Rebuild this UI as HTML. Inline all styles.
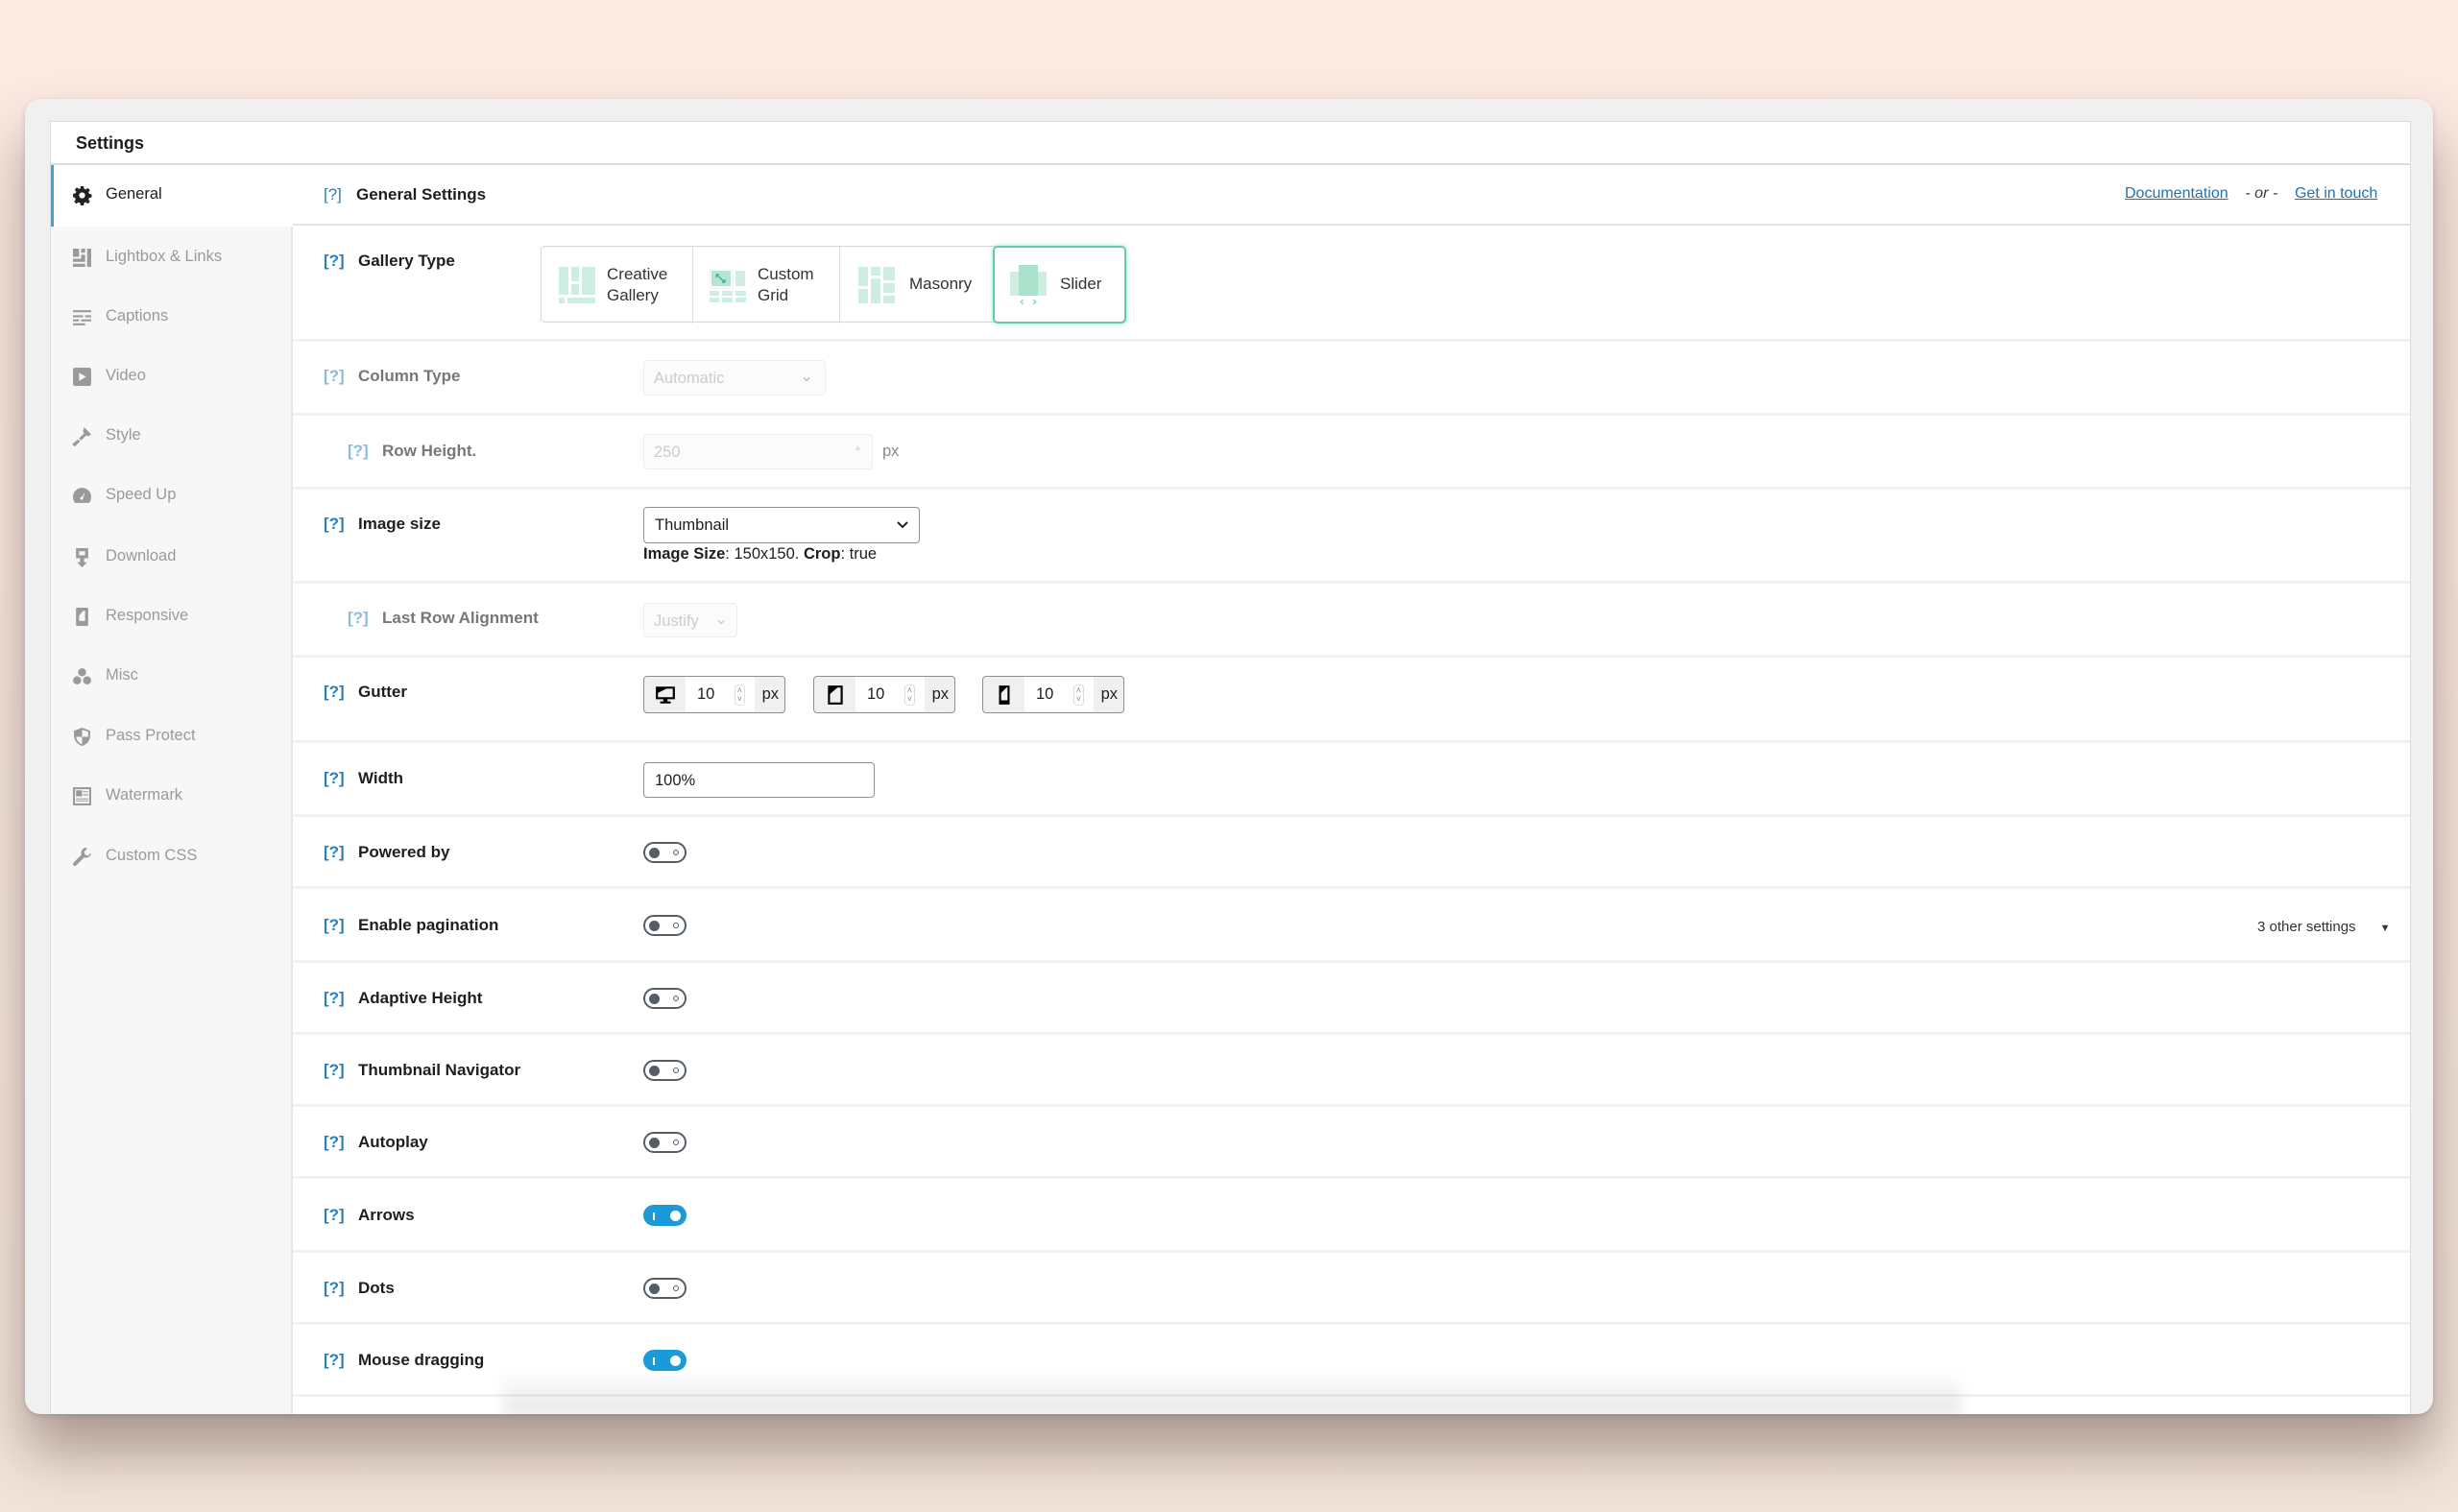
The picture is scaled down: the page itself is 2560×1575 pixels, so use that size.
<!DOCTYPE html>
<html><head><meta charset="utf-8">
<style>
*{box-sizing:border-box;margin:0;padding:0}
html,body{width:2560px;height:1575px;overflow:hidden}
body{background:linear-gradient(#fceae2,#f6e6dd 60%,#f3e4da);font-family:"Liberation Sans",sans-serif;position:relative;color:#1e1e1e}
.win{position:absolute;left:26px;top:103px;width:2508px;height:1370px;background:#f0f0f0;border-radius:16px;box-shadow:0 40px 60px rgba(80,60,50,.45),0 2px 6px rgba(0,0,0,.15)}
.panel{position:absolute;left:52px;top:126px;width:2459px;height:1347px;background:#fff;border:1px solid #ddd;border-bottom:none;overflow:hidden}
.abs{position:absolute}
.hdr{left:0;top:0;width:100%;height:45px;border-bottom:2px solid #dcdcdc}
.hdr span{position:absolute;left:26px;top:12px;font-weight:bold;font-size:18px}
.side{left:0;top:45px;width:252px;height:1400px;background:#f7f7f7;border-right:2px solid #e6e6e6}
.nav{position:absolute;left:0;width:252px;height:40px;font-size:16.5px;color:#9a9a9a}
.nav svg{position:absolute;left:22px;top:10px;width:21px;height:21px;fill:#9a9a9a}
.nav span{position:absolute;left:57px;top:10px}
.nav.act{background:#fff;border-left:3px solid #4a9fd0;height:64px;top:0;color:#1e1e1e}
.nav.act svg{fill:#222;left:19px;top:21px}
.nav.act span{left:54px;top:21px}
.line{position:absolute;left:252px;right:0;height:3px;background:#f1f1f1}
.q{position:absolute;color:#2a7fb8;font-size:17px;font-weight:bold}
.q.dis{color:#8bbbd8}
.lab{position:absolute;font-weight:bold;font-size:17px;color:#1e1e1e}
.lab.dis{color:#777}
.tg{position:absolute;left:617px;width:45px;height:22px;border:2.5px solid #555d66;border-radius:11px}
.tg:before{content:"";position:absolute;left:4px;top:3.5px;width:11px;height:11px;border-radius:50%;background:#555d66}
.tg:after{content:"";position:absolute;right:6px;top:5.5px;width:6px;height:6px;border-radius:50%;border:1.5px solid #555d66;box-sizing:border-box}
.tg.on{background:#1a9ad6;border-color:#1a9ad6}
.tg.on:before{left:auto;right:4px;background:#fff}
.tg.on:after{right:auto;left:8px;top:6px;width:2px;height:8px;border:none;border-radius:0;background:#fff}
.gt{position:absolute;top:0;height:80px;font-size:17px;color:#333}
.gt+.gt{border-left:1.5px solid #ddd}
.gg{position:absolute;top:577px;height:39px;width:148px;border:1.5px solid #8c8f94;border-radius:4px;background:#f0f0f1;font-size:16.5px;overflow:hidden}
.gg .in{position:absolute;left:43px;top:0;width:72px;height:36px;background:#fff}
.gg .in b{font-weight:normal;position:absolute;left:12px;top:9px}
.gg .in i{position:absolute;right:10px;top:8px;font-style:normal;font-size:9px;line-height:9px;color:#888;border:1px solid #ddd;border-radius:4px;padding:1px 2px}
.gg .px{position:absolute;right:6px;top:9px}
.gg svg{position:absolute;left:11px;top:8px}
</style></head><body>
<div class="win"></div>
<div class="panel">
 <div class="abs hdr"><span>Settings</span></div>
 <div class="abs side"></div>
 <div class="abs" style="left:0;top:45px;width:252px;height:1400px">
  <div class="nav act"><svg viewBox="0 0 20 20"><path d="M8.5 1h3l.5 2.5 1.6.7 2.1-1.5 2.1 2.1-1.5 2.1.7 1.6 2.5.5v3l-2.5.5-.7 1.6 1.5 2.1-2.1 2.1-2.1-1.5-1.6.7-.5 2.5h-3l-.5-2.5-1.6-.7-2.1 1.5-2.1-2.1 1.5-2.1-.7-1.6L1 11.5v-3l2.5-.5.7-1.6-1.5-2.1 2.1-2.1 2.1 1.5 1.6-.7zM10 7a3 3 0 100 6 3 3 0 000-6z"/></svg><span>General</span></div>
  <div class="nav" style="top:76px"><svg viewBox="0 0 20 20"><path d="M1 1h6v8H1zM9 1h4v4H9zM9 7h4v4H9zM15 1h4v18h-4zM1 11h12v3H1zM1 16h12v3H1z"/></svg><span>Lightbox &amp; Links</span></div>
  <div class="nav" style="top:138px"><svg viewBox="0 0 20 20"><path d="M1 3h18v2H1zM1 8h10v2H1zM13 8h6v2h-6zM1 12h6v2H1zM9 12h10v2H9zM1 16h12v2H1z"/></svg><span>Captions</span></div>
  <div class="nav" style="top:200px"><svg viewBox="0 0 20 20"><path d="M3 1h14a2 2 0 012 2v14a2 2 0 01-2 2H3a2 2 0 01-2-2V3a2 2 0 012-2zm4 5v8l7-4z" fill-rule="evenodd"/></svg><span>Video</span></div>
  <div class="nav" style="top:262px"><svg viewBox="0 0 20 20"><path d="M12 1l7 7-3 2-2-1-5 5-2-2 5-5-1-2zM6 13l2 2-5 5-2-1-.5-1.5z"/></svg><span>Style</span></div>
  <div class="nav" style="top:324px"><svg viewBox="0 0 20 20"><path d="M10 2a9 9 0 00-9 9c0 3 1 5 2 6h14c1-1 2-3 2-6a9 9 0 00-9-9zm0 9l3-5-2 6a1.5 1.5 0 11-1-1z"/></svg><span>Speed Up</span></div>
  <div class="nav" style="top:388px"><svg viewBox="0 0 20 20"><path d="M4 1h12v10h-4v4h3l-5 5-5-5h3v-4H4zm3 3v4h6V4z" fill-rule="evenodd"/></svg><span>Download</span></div>
  <div class="nav" style="top:450px"><svg viewBox="0 0 20 20"><path d="M5 1h10a1 1 0 011 1v16a1 1 0 01-1 1H5a1 1 0 01-1-1V2a1 1 0 011-1zm2 3v10h6V4zm0 0h4l-4 5z" fill-rule="evenodd"/></svg><span>Responsive</span></div>
  <div class="nav" style="top:512px"><svg viewBox="0 0 20 20"><circle cx="10" cy="6" r="4"/><circle cx="5" cy="14" r="4"/><circle cx="15" cy="14" r="4"/></svg><span>Misc</span></div>
  <div class="nav" style="top:575px"><svg viewBox="0 0 20 20"><path d="M10 1l8 3v5c0 5-4 9-8 10-4-1-8-5-8-10V4zm0 2v7H4c.5 3.5 3 6.5 6 7.5V10h6V5z" fill-rule="evenodd"/></svg><span>Pass Protect</span></div>
  <div class="nav" style="top:637px"><svg viewBox="0 0 20 20"><path d="M1 1h18v18H1zm2 2v14h14V3zm1 1h6v6H4zm7 1h5v1h-5zm0 3h5v1h-5zM4 12h12v1H4zm0 2h12v1H4z" fill-rule="evenodd"/></svg><span>Watermark</span></div>
  <div class="nav" style="top:700px"><svg viewBox="0 0 20 20"><path d="M14 1a5 5 0 00-4.6 6.9L1.5 15.8a1.8 1.8 0 002.7 2.7l7.9-7.9A5 5 0 0019 6l-3 3-3-1-1-3 3-3z"/></svg><span>Custom CSS</span></div>
 </div>

 <div class="line" style="top:106px;height:2px;background:#e2e2e2"></div>
 <div class="q" style="left:284px;top:66px;font-weight:normal">[?]</div>
 <div class="lab" style="left:318px;top:66px">General Settings</div>
 <div class="abs" style="left:2160px;top:66px;font-size:16px;color:#3a3a3a">
  <span style="color:#2271b1;text-decoration:underline">Documentation</span>&nbsp;&nbsp;&nbsp; <i>- or -</i> &nbsp;&nbsp;&nbsp;<span style="color:#2271b1;text-decoration:underline">Get in touch</span></div>

 <div class="line" style="top:226px"></div>
 <div class="line" style="top:303px"></div>
 <div class="line" style="top:380px"></div>
 <div class="line" style="top:478px"></div>
 <div class="line" style="top:555px"></div>
 <div class="line" style="top:644px"></div>
 <div class="line" style="top:721px"></div>
 <div class="line" style="top:796px"></div>
 <div class="line" style="top:873px"></div>
 <div class="line" style="top:948px"></div>
 <div class="line" style="top:1023px"></div>
 <div class="line" style="top:1098px"></div>
 <div class="line" style="top:1175px"></div>
 <div class="line" style="top:1250px"></div>
 <div class="line" style="top:1325px"></div>

 <div class="q" style="left:284px;top:135px">[?]</div>
 <div class="lab" style="left:320px;top:135px">Gallery Type</div>
 <div class="abs" style="left:510px;top:129px;width:609px;height:80px;border:1.5px solid #d5d5d5;border-radius:5px">
  <div class="gt" style="left:0;width:157px">
   <svg class="abs" style="left:18px;top:21px" width="38" height="38" viewBox="0 0 38 38" fill="#cfeee2"><rect x="0" y="0" width="10" height="29"/><rect x="13" y="0" width="8" height="15"/><rect x="13" y="18" width="8" height="11"/><rect x="24" y="0" width="14" height="29"/><rect x="0" y="32" width="6" height="6"/><rect x="9" y="32" width="29" height="6"/></svg>
   <div class="abs" style="left:68px;top:18px;line-height:22px">Creative<br>Gallery</div></div>
  <div class="gt" style="left:157px;width:153px">
   <svg class="abs" style="left:17px;top:23px" width="38" height="36" viewBox="0 0 38 36" fill="#cfeee2"><rect x="2" y="2" width="20" height="16" fill="#b4e4d2"/><rect x="0" y="0" width="24" height="20" fill="none" stroke="#e3f5ee"/><rect x="27" y="2" width="10" height="16"/><path d="M7 6l9 8M7 6h3M7 6v3M16 14h-3M16 14v-3" stroke="#3cb88a" stroke-width="1.4" fill="none"/><rect x="0" y="23" width="10" height="5"/><rect x="13" y="23" width="11" height="5"/><rect x="27" y="23" width="11" height="5"/><rect x="0" y="30" width="10" height="5"/><rect x="13" y="30" width="11" height="5"/><rect x="27" y="30" width="11" height="5"/></svg>
   <div class="abs" style="left:67px;top:18px;line-height:22px">Custom<br>Grid</div></div>
  <div class="gt" style="left:310px;width:160px">
   <svg class="abs" style="left:19px;top:21px" width="38" height="38" viewBox="0 0 38 38" fill="#cfeee2"><rect x="0" y="0" width="10" height="20"/><rect x="0" y="23" width="10" height="15"/><rect x="13" y="0" width="10" height="9"/><rect x="13" y="12" width="10" height="26"/><rect x="26" y="0" width="12" height="14"/><rect x="26" y="17" width="12" height="10"/><rect x="26" y="30" width="12" height="8"/></svg>
   <div class="abs" style="left:72px;top:29px">Masonry</div></div>
  <div class="gt" style="left:470px;width:139px;top:-1.5px;height:81px;border:2.5px solid #5ccfa4;border-radius:5px;box-shadow:0 0 5px rgba(92,207,164,.6)">
   <svg class="abs" style="left:16px;top:18px" width="38" height="42" viewBox="0 0 38 42" fill="#cfeee2"><rect x="0" y="7" width="38" height="25"/><rect x="9" y="0" width="20" height="32" fill="#a8e2cc"/><path d="M14 36l-3 2.5 3 2.5M24 36l3 2.5-3 2.5" stroke="#8fcfb5" stroke-width="1.2" fill="none"/></svg>
   <div class="abs" style="left:68px;top:28px">Slider</div></div>
 </div>

 <div class="q dis" style="left:284px;top:255px">[?]</div>
 <div class="lab dis" style="left:320px;top:255px">Column Type</div>
 <div class="abs" style="left:617px;top:248px;width:190px;height:37px;border:1.5px solid #eee;border-radius:4px;background:#fbfbfb;color:#ccc;font-size:16.5px;padding:9px 10px">Automatic<span style="position:absolute;right:12px;top:6px;color:#bbb">&#x2304;</span></div>

 <div class="q dis" style="left:309px;top:333px">[?]</div>
 <div class="lab dis" style="left:345px;top:333px">Row Height.</div>
 <div class="abs" style="left:617px;top:325px;width:239px;height:37px;border:1.5px solid #eee;border-radius:4px;background:#fbfbfb;color:#ccc;font-size:16.5px;padding:9px 10px">250<span style="position:absolute;right:12px;top:8px;font-size:10px;color:#ddd">&#x25B4;<br></span></div>
 <div class="abs" style="left:866px;top:334px;font-size:16.5px;color:#888">px</div>

 <div class="q" style="left:284px;top:409px">[?]</div>
 <div class="lab" style="left:320px;top:409px">Image size</div>
 <div class="abs" style="left:617px;top:401px;width:288px;height:38px;border:1.5px solid #8c8f94;border-radius:4px;font-size:16.5px;padding:9px 11px">Thumbnail
  <svg class="abs" style="right:10px;top:13px" width="14" height="10" viewBox="0 0 14 10"><path d="M2 2l5 5 5-5" stroke="#222" stroke-width="2" fill="none"/></svg></div>
 <div class="abs" style="left:617px;top:441px;font-size:16.5px"><b>Image Size</b>: 150x150. <b>Crop</b>: true</div>

 <div class="q dis" style="left:309px;top:507px">[?]</div>
 <div class="lab dis" style="left:345px;top:507px">Last Row Alignment</div>
 <div class="abs" style="left:617px;top:501px;width:98px;height:36px;border:1.5px solid #eee;border-radius:4px;background:#fbfbfb;color:#ccc;font-size:16.5px;padding:9px 10px">Justify<span style="position:absolute;right:9px;top:6px;color:#ccc">&#x2304;</span></div>

 <div class="q" style="left:284px;top:584px">[?]</div>
 <div class="lab" style="left:320px;top:584px">Gutter</div>
 <div class="gg" style="left:617px"><svg width="22" height="22" viewBox="0 0 20 20"><path d="M1 2h18v12h-7v2h3v2H5v-2h3v-2H1zm2 2v8h14V4zm0 0h8l-8 4z" fill-rule="evenodd"/></svg><div class="in"><b>10</b><i>&#x02C4;<br>&#x02C5;</i></div><span class="px">px</span></div>
 <div class="gg" style="left:794px"><svg width="22" height="22" viewBox="0 0 20 20"><path d="M3 1h14v18H3zm2 2v14h10V3zm0 0h7l-7 6z" fill-rule="evenodd"/></svg><div class="in"><b>10</b><i>&#x02C4;<br>&#x02C5;</i></div><span class="px">px</span></div>
 <div class="gg" style="left:970px"><svg width="22" height="22" viewBox="0 0 20 20"><path d="M5 1h10v18H5zm2 2v12h6V3zm0 0h5l-5 5z" fill-rule="evenodd"/></svg><div class="in"><b>10</b><i>&#x02C4;<br>&#x02C5;</i></div><span class="px">px</span></div>

 <div class="q" style="left:284px;top:674px">[?]</div>
 <div class="lab" style="left:320px;top:674px">Width</div>
 <div class="abs" style="left:617px;top:667px;width:241px;height:37px;border:1.5px solid #8c8f94;border-radius:4px;font-size:16.5px;padding:9px 11px">100%</div>

 <div class="q" style="left:284px;top:751px">[?]</div><div class="lab" style="left:320px;top:751px">Powered by</div><div class="tg" style="top:750px"></div>
 <div class="q" style="left:284px;top:827px">[?]</div><div class="lab" style="left:320px;top:827px">Enable pagination</div><div class="tg" style="top:826px"></div>
 <div class="abs" style="left:2298px;top:830px;font-size:15px;color:#333">3 other settings &nbsp;&nbsp;&nbsp;&nbsp;&nbsp;<span style="font-size:11px">&#x25BC;</span></div>
 <div class="q" style="left:284px;top:903px">[?]</div><div class="lab" style="left:320px;top:903px">Adaptive Height</div><div class="tg" style="top:902px"></div>
 <div class="q" style="left:284px;top:978px">[?]</div><div class="lab" style="left:320px;top:978px">Thumbnail Navigator</div><div class="tg" style="top:977px"></div>
 <div class="q" style="left:284px;top:1053px">[?]</div><div class="lab" style="left:320px;top:1053px">Autoplay</div><div class="tg" style="top:1052px"></div>
 <div class="q" style="left:284px;top:1129px">[?]</div><div class="lab" style="left:320px;top:1129px">Arrows</div><div class="tg on" style="top:1128px"></div>
 <div class="q" style="left:284px;top:1205px">[?]</div><div class="lab" style="left:320px;top:1205px">Dots</div><div class="tg" style="top:1204px"></div>
 <div class="q" style="left:284px;top:1280px">[?]</div><div class="lab" style="left:320px;top:1280px">Mouse dragging</div><div class="tg on" style="top:1279px"></div>
 <div class="abs" style="left:470px;top:1300px;width:1520px;height:47px;background:linear-gradient(rgba(0,0,0,0),rgba(0,0,0,.09));filter:blur(6px)"></div>
</div>
</body></html>
